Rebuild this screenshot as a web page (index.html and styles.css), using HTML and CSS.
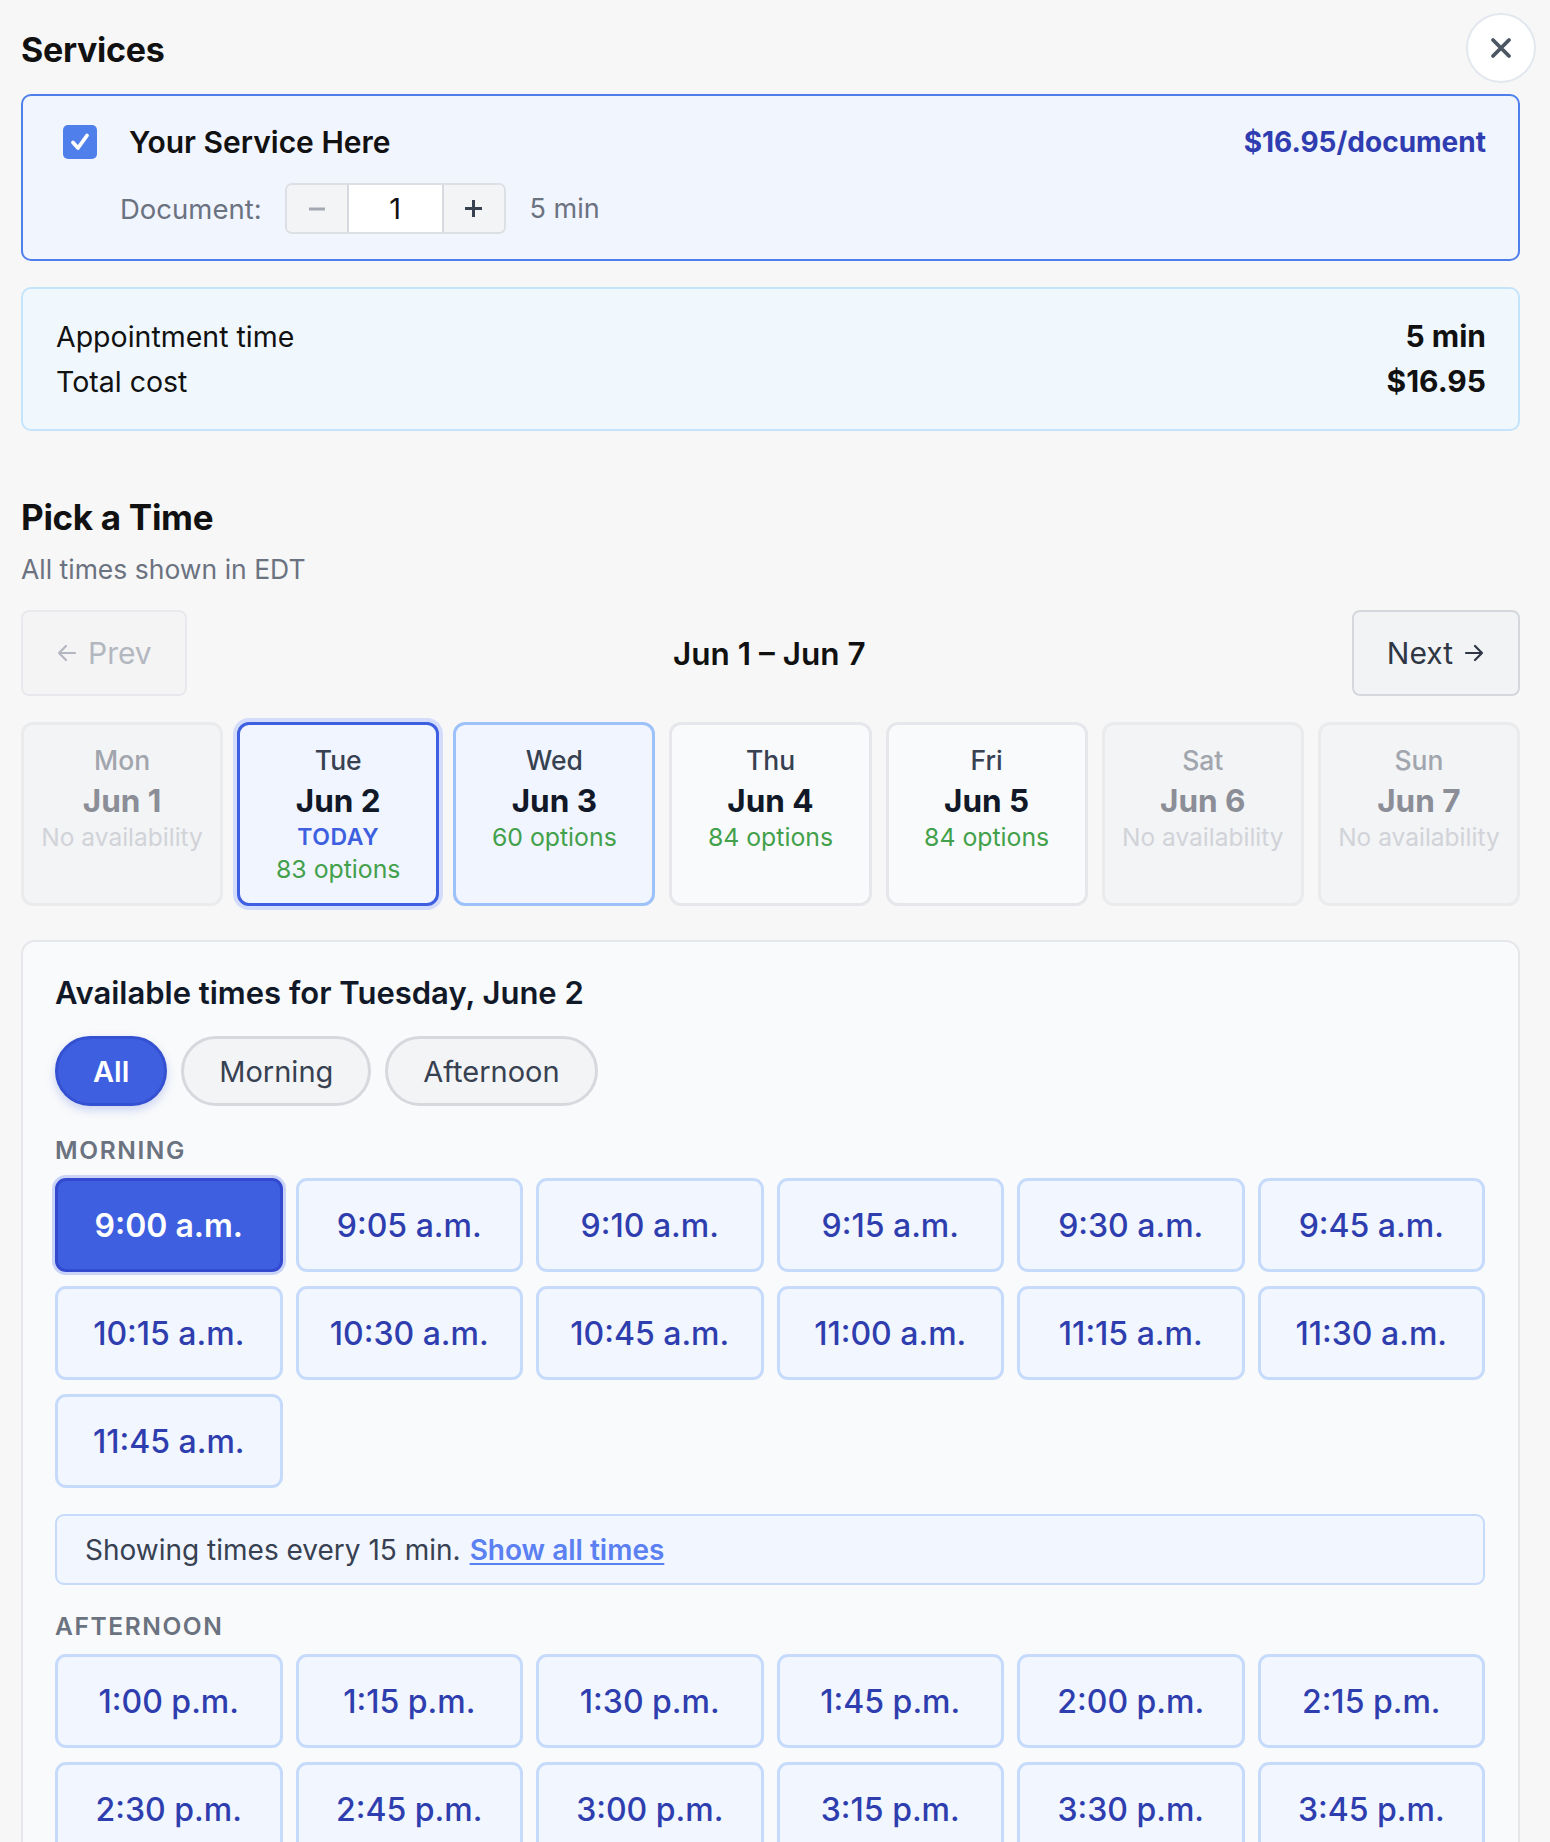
FILE: index.html
```html
<!DOCTYPE html>
<html lang="en">
<head>
  <meta charset="UTF-8">
  <title>Book an appointment</title>
  <meta name="viewport" content="width=device-width, initial-scale=1.0">
  <link rel="stylesheet" href="styles.css">
</head>
<body>

<div class="page">
  <div class="page-head">
    <h2 class="section-title">Services</h2>
    <button class="close-btn" aria-label="Close">
      <svg width="24" height="24" viewBox="0 0 24 24"><path d="M4 4L20 20M20 4L4 20" stroke="#4b5563" stroke-width="3.8" stroke-linecap="round"/></svg>
    </button>
  </div>

  <!-- selected service -->
  <div class="service-card">
    <div class="service-top">
      <span class="checkbox">
        <svg width="24" height="24" viewBox="0 0 24 24"><path d="M5 12.5L10 18L19 5.5" fill="none" stroke="#fff" stroke-width="3.8" stroke-linecap="round" stroke-linejoin="round"/></svg>
      </span>
      <span class="service-name">Your Service Here</span>
      <span class="service-price">$16.95/document</span>
    </div>
    <div class="doc-row">
      <span class="doc-label">Document:</span>
      <div class="stepper">
        <button class="step minus" aria-label="Less">
          <svg width="18" height="18" viewBox="0 0 18 18"><path d="M1 9H17" stroke="#a3a8b1" stroke-width="3"/></svg>
        </button>
        <input class="step-input" type="text" value="1">
        <button class="step plus" aria-label="More">
          <svg width="19" height="19" viewBox="0 0 19 19"><path d="M1 9.5H18M9.5 1V18" stroke="#374151" stroke-width="3"/></svg>
        </button>
      </div>
      <span class="doc-time">5 min</span>
    </div>
  </div>

  <div class="summary-card">
    <div class="summary-row"><span>Appointment time</span><b>5 min</b></div>
    <div class="summary-row"><span>Total cost</span><b>$16.95</b></div>
  </div>

  <h2 class="pick-title">Pick a Time</h2>
  <p class="pick-sub">All times shown in EDT</p>

  <div class="week-nav">
    <button class="nav-btn disabled">
      <svg width="22" height="22" viewBox="0 0 22 22"><path d="M19 11H3M10 4L3 11L10 18" fill="none" stroke="currentColor" stroke-width="2.2" stroke-linecap="round" stroke-linejoin="round"/></svg>
      Prev
    </button>
    <div class="week-range">Jun 1 – Jun 7</div>
    <button class="nav-btn next">
      Next
      <svg width="22" height="22" viewBox="0 0 22 22"><path d="M3 11H19M12 4L19 11L12 18" fill="none" stroke="currentColor" stroke-width="2.2" stroke-linecap="round" stroke-linejoin="round"/></svg>
    </button>
  </div>

  <div class="days">
    <div class="day off">
      <div class="day-name">Mon</div>
      <div class="day-date">Jun 1</div>
      <div class="day-none">No availability</div>
    </div>
    <div class="day selected">
      <div class="day-name">Tue</div>
      <div class="day-date">Jun 2</div>
      <div class="day-today">TODAY</div>
      <div class="day-opts">83 options</div>
    </div>
    <div class="day soft">
      <div class="day-name">Wed</div>
      <div class="day-date">Jun 3</div>
      <div class="day-opts">60 options</div>
    </div>
    <div class="day">
      <div class="day-name">Thu</div>
      <div class="day-date">Jun 4</div>
      <div class="day-opts">84 options</div>
    </div>
    <div class="day">
      <div class="day-name">Fri</div>
      <div class="day-date">Jun 5</div>
      <div class="day-opts">84 options</div>
    </div>
    <div class="day off">
      <div class="day-name">Sat</div>
      <div class="day-date">Jun 6</div>
      <div class="day-none">No availability</div>
    </div>
    <div class="day off">
      <div class="day-name">Sun</div>
      <div class="day-date">Jun 7</div>
      <div class="day-none">No availability</div>
    </div>
  </div>

  <div class="times-panel">
    <h3 class="times-title">Available times for Tuesday, June 2</h3>

    <div class="filters">
      <button class="pill active">All</button>
      <button class="pill">Morning</button>
      <button class="pill">Afternoon</button>
    </div>

    <div class="group-label">MORNING</div>
    <div class="slots">
      <button class="slot picked">9:00 a.m.</button>
      <button class="slot">9:05 a.m.</button>
      <button class="slot">9:10 a.m.</button>
      <button class="slot">9:15 a.m.</button>
      <button class="slot">9:30 a.m.</button>
      <button class="slot">9:45 a.m.</button>
      <button class="slot">10:15 a.m.</button>
      <button class="slot">10:30 a.m.</button>
      <button class="slot">10:45 a.m.</button>
      <button class="slot">11:00 a.m.</button>
      <button class="slot">11:15 a.m.</button>
      <button class="slot">11:30 a.m.</button>
      <button class="slot">11:45 a.m.</button>
    </div>

    <div class="notice">Showing times every 15 min. <a href="#">Show all times</a></div>

    <div class="group-label">AFTERNOON</div>
    <div class="slots">
      <button class="slot">1:00 p.m.</button>
      <button class="slot">1:15 p.m.</button>
      <button class="slot">1:30 p.m.</button>
      <button class="slot">1:45 p.m.</button>
      <button class="slot">2:00 p.m.</button>
      <button class="slot">2:15 p.m.</button>
      <button class="slot">2:30 p.m.</button>
      <button class="slot">2:45 p.m.</button>
      <button class="slot">3:00 p.m.</button>
      <button class="slot">3:15 p.m.</button>
      <button class="slot">3:30 p.m.</button>
      <button class="slot">3:45 p.m.</button>
    </div>
  </div>
</div>

</body>
</html>
```

FILE: styles.css
```css
* { margin: 0; padding: 0; box-sizing: border-box; font-family: 'Inter', 'Noto Sans', sans-serif; }
body { background: #f7f7f8; color: #111827; }
button { font-family: inherit; cursor: pointer; }

.page { padding: 13px 30px 40px 21px; }

/* header */
.page-head { display: flex; justify-content: space-between; align-items: center; height: 70px; margin-bottom: 11px; }
.section-title { padding-top: 4px; font-size: 34px; line-height: 40px; font-weight: 700; letter-spacing: -0.3px; color: #111; }
.close-btn {
  width: 70px; height: 70px; margin-right: -16px;
  border-radius: 50%; border: 2px solid #e3e7ee; background: #fff;
  display: flex; align-items: center; justify-content: center;
}

/* service card */
.service-card { background: #f1f5fe; border: 2px solid #4f7fea; border-radius: 10px; padding: 29px 32px 25px 32px; }
.service-top { display: flex; align-items: center; height: 34px; }
.checkbox {
  width: 34px; height: 34px; margin-left: 8px; border-radius: 5px; background: #4f7fea;
  display: flex; align-items: center; justify-content: center;
}
.service-name { flex: 1; margin-left: 32px; font-size: 30px; font-weight: 600; color: #111; }
.service-price { font-size: 28px; font-weight: 700; color: #2f3db0; }

.doc-row { display: flex; align-items: center; margin-top: 24px; margin-left: 65px; }
.doc-label { font-size: 27.5px; color: #6b7280; margin-right: 23px; }
.doc-time { font-size: 27px; color: #6b7280; margin-left: 24px; }
.stepper { display: flex; height: 51px; border: 2px solid #dcdfe4; border-radius: 7px; overflow: hidden; }
.step { width: 60px; border: none; background: #f3f4f6; display: flex; align-items: center; justify-content: center; }
.step-input {
  width: 97px; border: none; border-left: 2px solid #d6d9de; border-right: 2px solid #d6d9de;
  background: #fff; text-align: center; font-size: 29px; color: #111; outline: none;
}

/* summary */
.summary-card { margin-top: 26px; background: #f0f8fe; border: 2px solid #c4e4fb; border-radius: 10px; padding: 25px 32px 25px 33px; }
.summary-row { display: flex; justify-content: space-between; align-items: center; font-size: 28.5px; line-height: 45px; color: #111; }
.summary-row b { font-size: 30px; font-weight: 700; }

/* pick a time */
.pick-title { margin-top: 66px; font-size: 35px; line-height: 40px; font-weight: 700; letter-spacing: -0.3px; color: #111; }
.pick-sub { margin-top: 15px; font-size: 26.5px; line-height: 34px; color: #6b7280; }

.week-nav { margin-top: 24px; display: flex; align-items: center; justify-content: space-between; }
.nav-btn { height: 86px; padding: 0 33px; border-radius: 8px; font-size: 30px; display: flex; align-items: center; gap: 10px; }
.nav-btn.disabled { background: #f4f4f5; border: 2px solid #e8e9ec; color: #b3b7bf; cursor: default; }
.nav-btn.next { background: #f2f3f5; border: 2px solid #d4d7dc; color: #2f3744; }
.week-range { font-size: 31.5px; font-weight: 600; color: #111; }

/* day cards */
.days { margin-top: 26px; display: grid; grid-template-columns: repeat(7, 1fr); gap: 14px; }
.day { height: 184px; border: 3px solid #e5e7eb; border-radius: 12px; background: #f9fafb; text-align: center; padding-top: 20px; }
.day-name { font-size: 26.5px; line-height: 30px; font-weight: 500; color: #374151; }
.day-date { margin-top: 8px; font-size: 31.5px; line-height: 36px; font-weight: 700; color: #111827; }
.day-none { margin-top: 2px; font-size: 24.5px; line-height: 32px; color: #d1d3d8; }
.day-today { margin-top: 2px; font-size: 23px; line-height: 32px; font-weight: 600; letter-spacing: 0.5px; color: #3d5fe0; }
.day-opts { margin-top: 2px; font-size: 24.8px; line-height: 32px; color: #43a04b; }
.day-today + .day-opts { margin-top: 0; }
.day.off { background: #f3f4f6; border-color: #eaebed; }
.day.off .day-name { color: #a1a5ad; }
.day.off .day-date { color: #8b8e96; }
.day.soft { background: #f0f5ff; border-color: #9dc2fa; }
.day.selected { background: #f0f5ff; border-color: #3d5fe0; box-shadow: 0 0 0 4px #d3dcfb; }

/* times panel */
.times-panel { margin-top: 34px; background: #f9fafb; border: 2px solid #e6e7ea; border-radius: 14px; padding: 33px 33px 40px 32px; }
.times-title { font-size: 31px; line-height: 36px; font-weight: 600; color: #111827; }

.filters { margin-top: 25px; display: flex; gap: 14px; }
.pill { height: 70px; padding: 0 35px; border-radius: 35px; border: 3px solid #d6d8dd; background: #f3f4f6; font-size: 29px; color: #374151; }
.pill.active { background: #3d5fe0; border-color: #3451d1; color: #fff; font-weight: 600; box-shadow: 0 4px 10px rgba(61, 95, 224, 0.25); }

.group-label { margin-top: 30px; font-size: 24.5px; line-height: 28px; font-weight: 600; letter-spacing: 1.6px; color: #6b7280; }
.notice + .group-label { margin-top: 27px; }

.slots { margin-top: 14px; display: grid; grid-template-columns: repeat(6, 1fr); gap: 14px 13px; }
.slot { height: 94px; border: 3px solid #c6dbfc; border-radius: 11px; background: #f2f6ff; font-size: 32px; font-weight: 500; color: #2f3eae; }
.slot.picked { background: #3d5fe0; border-color: #3349cf; color: #fff; font-weight: 600; box-shadow: 0 0 0 3px #c9d3f7; }

.notice { margin-top: 26px; border: 2px solid #c6dbfc; border-radius: 9px; background: #f2f6ff; padding: 0 28px; height: 71px; display: flex; align-items: center; font-size: 28px; color: #374151; }
.notice a { margin-left: 9px; color: #5b80f2; font-weight: 600; text-decoration: underline; text-underline-offset: 3px; }
```
